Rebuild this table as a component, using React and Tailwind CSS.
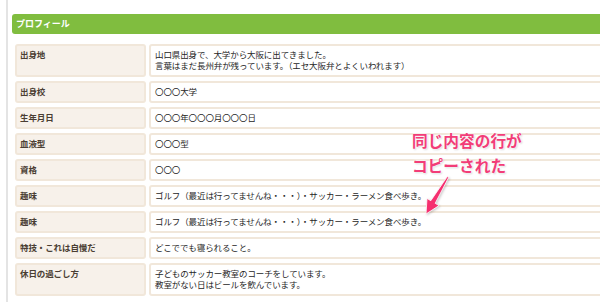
const rows = [
  {
    label: '出身地',
    value: ['山口県出身で、大学から大阪に出てきました。', '言葉はまだ長州弁が残っています。（エセ大阪弁とよくいわれます）'],
  },
  { label: '出身校', value: ['〇〇〇大学'] },
  { label: '生年月日', value: ['〇〇〇年〇〇〇月〇〇〇日'] },
  { label: '血液型', value: ['〇〇〇型'] },
  { label: '資格', value: ['〇〇〇'] },
  { label: '趣味', value: ['ゴルフ（最近は行ってませんね・・・）・サッカー・ラーメン食べ歩き。'] },
  { label: '趣味', value: ['ゴルフ（最近は行ってませんね・・・）・サッカー・ラーメン食べ歩き。'] },
  { label: '特技・これは自慢だ', value: ['どこででも寝られること。'] },
  {
    label: '休日の過ごし方',
    value: ['子どものサッカー教室のコーチをしています。', '教室がない日はビールを飲んでいます。'],
  },
];

const cell = 'border-2 border-[#f1e7da] rounded-[3px] pt-[3px] pb-[4px] pl-[3px] leading-[11px] text-[8.5px] tracking-[-0.1px]';

export default function App() {
  return (
    <div
      className="relative w-[600px] h-[302px] overflow-hidden bg-white flex"
      style={{ fontFamily: '"Noto Sans CJK JP", "Noto Sans", sans-serif' }}
    >
      <div className="w-[6px] shrink-0" />
      <div className="border-l-2 border-[#e4e4e4] pl-[4px] shrink-0 w-[640px]">
        <div className="mt-[14px] h-[20px] bg-[#80bd3f] rounded-[3px] pl-[4px] leading-[20px] text-[9px] font-bold text-white">
          プロフィール
        </div>

        <div className="mt-[10px] ml-[3px] grid grid-cols-[131px_1fr] gap-x-[3px] gap-y-[4px]">
          {rows.map((row, i) => (
            <div key={i} className="contents">
              <div className={`${cell} bg-[#f7f1ea] font-bold text-[#4a3e33]`}>{row.label}</div>
              <div className={`${cell} bg-white text-[#262626] pl-[4px]`}>
                {row.value.map((line, j) => (
                  <div key={j}>{line}</div>
                ))}
              </div>
            </div>
          ))}
        </div>
      </div>

      {/* callout over the duplicated row */}
      <div className="absolute left-[412px] top-[128px] text-[15.7px] leading-[25px] font-bold text-[#f23d78] [text-shadow:0_0_2px_#fff,0_0_3px_#fff,1px_1px_2px_rgba(0,0,0,0.2)]">
        <div>同じ内容の行が</div>
        <div>コピーされた</div>
      </div>
      <svg
        className="absolute left-[410px] top-[170px] drop-shadow-[1px_1px_1px_rgba(0,0,0,0.2)]"
        width="50"
        height="50"
        viewBox="0 0 50 50"
      >
        <path
          d="M37.3 6.6 L38.7 7.4 L25.2 33.3 L29 35.6 L16 44 L17 28.4 L20.8 30.7 Z"
          fill="#f5306f"
          stroke="#fff"
          strokeWidth="0.8"
          strokeLinejoin="round"
        />
      </svg>
    </div>
  );
}
